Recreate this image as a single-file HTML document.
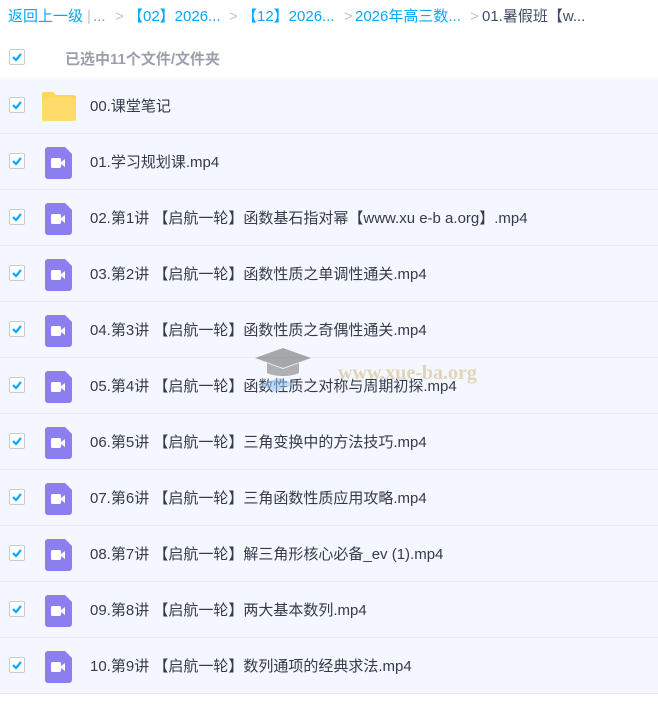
<!DOCTYPE html><html><head><meta charset="utf-8"><style>
body{margin:0;width:658px;height:706px;background:#fff;font-family:"Liberation Sans","Noto Sans CJK SC",sans-serif;position:relative;overflow:hidden}
.bc{position:absolute;top:7px;left:8px;font-size:15px;color:#06a7ff;white-space:nowrap;line-height:20px}
.bc span{position:absolute;top:0}
.g{color:#c0c4cc}.d{color:#424e67}
.cb{position:absolute;width:14px;height:14px;border:1px solid #c8ccd4;border-radius:2px;background:#fff;left:9px}
.cb svg{position:absolute;left:1px;top:1px}
.hd{position:absolute;top:48px;left:65px;font-size:15px;font-weight:bold;color:#9aa0ab}
.row{position:absolute;left:0;width:658px;height:55px;background:#f4f8fe;border-bottom:1px solid #e6ebf3}
.row .cb{top:19px}
.row .t{position:absolute;left:90px;top:17px;font-size:15px;color:#333a4a;white-space:nowrap}
.ic{position:absolute;left:45px;top:13px}
</style></head><body>
<div class="bc">
<span style="left:0">返回上一级</span><span class="g" style="left:79px">|</span><span class="g" style="left:85px;color:#8a94a6">...</span>
<span class="g" style="left:107px">&gt;</span><span style="left:120px">【02】2026...</span>
<span class="g" style="left:221px">&gt;</span><span style="left:234px">【12】2026...</span>
<span class="g" style="left:336px">&gt;</span><span style="left:347px">2026年高三数...</span>
<span class="g" style="left:462px">&gt;</span><span class="d" style="left:474px">01.暑假班【w...</span>
</div>
<div class="cb" style="top:49px"><svg width="12" height="12"><path d="M2 6l3 3 5-6" stroke="#06a7ff" stroke-width="2.2" fill="none"/></svg></div>
<div class="hd">已选中11个文件/文件夹</div>
<div id="rows"></div>
<script>
var n=["00.课堂笔记","01.学习规划课.mp4","02.第1讲 【启航一轮】函数基石指对幂【www.xu e-b a.org】.mp4","03.第2讲 【启航一轮】函数性质之单调性通关.mp4","04.第3讲 【启航一轮】函数性质之奇偶性通关.mp4","05.第4讲 【启航一轮】函数性质之对称与周期初探.mp4","06.第5讲 【启航一轮】三角变换中的方法技巧.mp4","07.第6讲 【启航一轮】三角函数性质应用攻略.mp4","08.第7讲 【启航一轮】解三角形核心必备_ev (1).mp4","09.第8讲 【启航一轮】两大基本数列.mp4","10.第9讲 【启航一轮】数列通项的经典求法.mp4"];
var h="";
var ck='<div class="cb"><svg width="12" height="12"><path d="M2 6l3 3 5-6" stroke="#06a7ff" stroke-width="2.2" fill="none"/></svg></div>';
var fold='<svg class="ic" width="34" height="30" style="left:42px;top:13px"><path d="M0 3a2 2 0 0 1 2-2h9l3 3h18a2 2 0 0 1 2 2v22a2 2 0 0 1-2 2H2a2 2 0 0 1-2-2z" fill="#ffd659"/><path d="M0 7h34v21a2 2 0 0 1-2 2H2a2 2 0 0 1-2-2z" fill="#ffdb6a"/></svg>';
var vid='<svg class="ic" width="27" height="32"><path d="M3 0h17l7 7v22a3 3 0 0 1-3 3H3a3 3 0 0 1-3-3V3a3 3 0 0 1 3-3z" fill="#8b7ff0"/><rect x="6" y="11" width="10" height="10" rx="1.5" fill="#fff"/><path d="M16 15l4-3v8l-4-3z" fill="#fff"/></svg>';
for(var i=0;i<n.length;i++){h+='<div class="row" style="top:'+(78+i*56)+'px">'+ck+(i?vid:fold)+'<div class="t">'+n[i]+'</div></div>';}
document.getElementById("rows").innerHTML=h;
</script>
<div style="position:absolute;left:255px;top:346px;width:60px;height:50px;opacity:.55">
<svg width="60" height="50"><path d="M0 12L28 2l28 10-28 10z" fill="#666"/><path d="M12 17v10c8 4 24 4 32 0V17l-16 6z" fill="#777"/><path d="M4 38l20-6 16 6-20 8z" fill="#8fc3ee"/></svg></div>
<div style="position:absolute;left:338px;top:362px;font-family:'Liberation Serif',serif;font-weight:bold;font-size:20px;color:#d8c69a;opacity:.7">www.xue-ba.org</div>
</body></html>
